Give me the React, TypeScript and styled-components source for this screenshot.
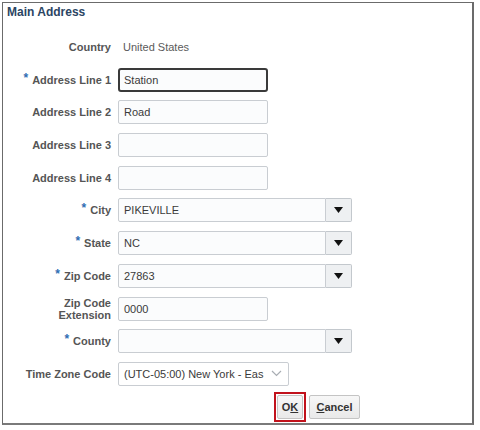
import React from "react";
import styled, { createGlobalStyle } from "styled-components";

const GlobalStyle = createGlobalStyle`
  html, body {
    margin: 0;
    padding: 0;
    background: #ffffff;
  }
  body {
    font-family: "Liberation Sans", Arial, sans-serif;
  }
`;

const Frame = styled.div`
  box-sizing: border-box;
  margin: 2px 0 0 2px;
  width: 472px;
  height: 423px;
  border: 1px solid #6b6b6b;
  border-bottom: 2px solid #7a7a7a;
  border-right: 2px solid #6b6b6b;
  display: flex;
  flex-direction: column;
`;

const Title = styled.h1`
  margin: 0;
  padding: 2px 0 0 4px;
  font-size: 12px;
  line-height: 15px;
  font-weight: bold;
  color: #2b4563;
`;

const Grid = styled.div`
  display: grid;
  grid-template-columns: 108px auto;
  column-gap: 7px;
  row-gap: 8.7px;
  align-items: center;
  margin-top: 15px;
`;

const Label = styled.div`
  justify-self: end;
  text-align: right;
  font-size: 11px;
  line-height: 12px;
  font-weight: bold;
  color: #555555;
  display: flex;
  align-items: flex-start;
`;

const Required = styled.span`
  color: #2f6db3;
  font-size: 12px;
  line-height: 10px;
  margin-right: 4px;
  margin-top: -1px;
`;

const Plain = styled.div`
  height: 24px;
  display: flex;
  align-items: center;
  padding-left: 5px;
  font-size: 11px;
  color: #5a5a5a;
`;

const TextBox = styled.div<{ $focused?: boolean }>`
  box-sizing: border-box;
  width: 150px;
  height: 24px;
  display: flex;
  align-items: center;
  padding-left: ${(p) => (p.$focused ? 4 : 5)}px;
  font-size: 11px;
  color: #3a3a3a;
  background: #fbfcfd;
  border: ${(p) => (p.$focused ? "2px solid #3a3a3a" : "1px solid #c9cdd2")};
  border-radius: ${(p) => (p.$focused ? 3 : 2)}px;
`;

const Combo = styled.div`
  display: flex;
  height: 24px;
`;

const ComboField = styled.div`
  box-sizing: border-box;
  width: 208px;
  height: 24px;
  display: flex;
  align-items: center;
  padding-left: 5px;
  font-size: 11px;
  color: #3a3a3a;
  background: #fbfcfd;
  border: 1px solid #c9cdd2;
  border-radius: 2px 0 0 2px;
`;

const ComboButton = styled.div`
  box-sizing: border-box;
  width: 26px;
  height: 24px;
  display: flex;
  align-items: center;
  justify-content: center;
  background: #eef0f2;
  border: 1px solid #c3c8cd;
  border-left: none;
  border-radius: 0 2px 2px 0;
`;

const Select = styled.div`
  box-sizing: border-box;
  width: 171px;
  height: 24px;
  display: flex;
  align-items: center;
  padding-left: 5px;
  font-size: 11px;
  color: #3a3a3a;
  background: #ffffff;
  border: 1px solid #c9cdd2;
  border-radius: 2px;
`;

const SelectText = styled.span`
  white-space: nowrap;
  width: 141px;
`;

const Chevron = styled.span`
  margin-left: 6px;
  display: flex;
`;

const Footer = styled.div`
  display: flex;
  align-items: center;
  gap: 3px;
  margin: 6px 0 0 271px;
`;

const ActiveRing = styled.div`
  box-sizing: border-box;
  padding: 1px;
  border: 2px solid #c1121c;
`;

const Button = styled.button<{ $w: number }>`
  box-sizing: border-box;
  width: ${(p) => p.$w}px;
  height: 24px;
  padding: 0;
  font-family: "Liberation Sans", Arial, sans-serif;
  font-size: 11px;
  font-weight: bold;
  color: #333333;
  background: linear-gradient(#f7f7f7, #e9e9e9);
  border: 1px solid #c4c4c4;
  border-radius: 2px;
`;

const Key = styled.span`
  text-decoration: underline;
`;

function Triangle() {
  return (
    <svg width="9" height="6" viewBox="0 0 9 6">
      <polygon points="0,0 9,0 4.5,6" fill="#111" />
    </svg>
  );
}

function Field({ label, required }: { label: React.ReactNode; required?: boolean }) {
  return (
    <Label>
      {required && <Required>*</Required>}
      <span>{label}</span>
    </Label>
  );
}

function ComboInput({ value }: { value: string }) {
  return (
    <Combo>
      <ComboField>{value}</ComboField>
      <ComboButton>
        <Triangle />
      </ComboButton>
    </Combo>
  );
}

export default function App() {
  return (
    <>
      <GlobalStyle />
      <Frame>
        <Title>Main Address</Title>
        <Grid>
          <Field label="Country" />
          <Plain>United States</Plain>

          <Field label="Address Line 1" required />
          <TextBox $focused>Station</TextBox>

          <Field label="Address Line 2" />
          <TextBox>Road</TextBox>

          <Field label="Address Line 3" />
          <TextBox />

          <Field label="Address Line 4" />
          <TextBox />

          <Field label="City" required />
          <ComboInput value="PIKEVILLE" />

          <Field label="State" required />
          <ComboInput value="NC" />

          <Field label="Zip Code" required />
          <ComboInput value="27863" />

          <Field
            label={
              <>
                Zip Code
                <br />
                Extension
              </>
            }
          />
          <TextBox>0000</TextBox>

          <Field label="County" required />
          <ComboInput value="" />

          <Field label="Time Zone Code" />
          <Select>
            <SelectText>(UTC-05:00) New York - Eas</SelectText>
            <Chevron>
              <svg width="11" height="7" viewBox="0 0 11 7">
                <polyline points="1,1 5.5,5.5 10,1" fill="none" stroke="#a8adb3" strokeWidth="1.2" />
              </svg>
            </Chevron>
          </Select>
        </Grid>
        <Footer>
          <ActiveRing>
            <Button $w={26}>
              O<Key>K</Key>
            </Button>
          </ActiveRing>
          <Button $w={51}>
            <Key>C</Key>ancel
          </Button>
        </Footer>
      </Frame>
    </>
  );
}
